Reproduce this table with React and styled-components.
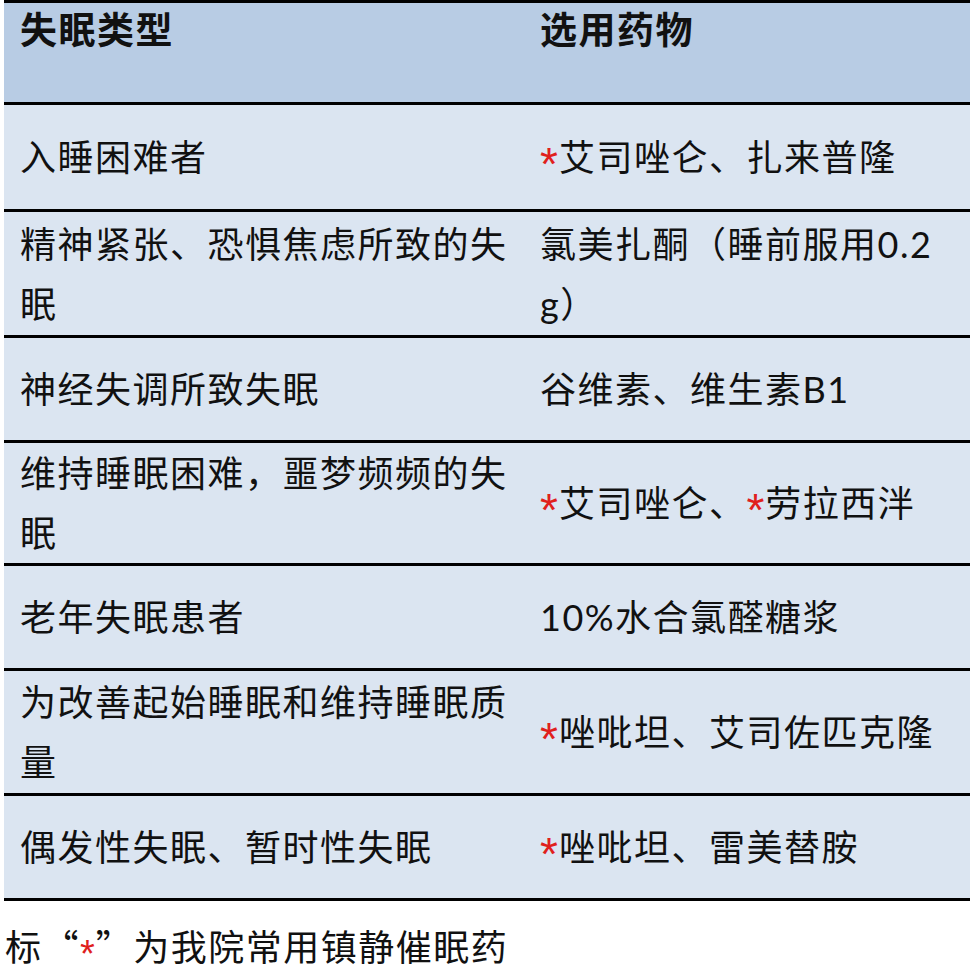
import React from 'react';
import styled, { createGlobalStyle } from 'styled-components';

const GlobalStyle = createGlobalStyle`
  html, body {
    margin: 0;
    padding: 0;
    background: #ffffff;
  }
  body {
    font-family: "Lato", "Noto Sans CJK SC", sans-serif;
    color: #111111;
  }
`;

const Page = styled.div`
  width: 972px;
  padding-left: 4px;
  box-sizing: border-box;
`;

const Table = styled.div`
  width: 966px;
  border-top: 3px solid #000;
`;

const Row = styled.div`
  display: grid;
  grid-template-columns: 520px 1fr;
  height: ${props => props.h}px;
  background: ${props => (props.header ? '#b8cce4' : '#dbe5f1')};
  border-bottom: 3px solid #000;
`;

const Cell = styled.div`
  display: flex;
  align-items: ${props => (props.header ? 'flex-start' : 'center')};
  padding-left: 16px;
  padding-top: ${props => (props.header ? 5 : 0)}px;
  font-size: ${props => (props.header ? 37 : 36)}px;
  font-weight: ${props => (props.header ? 700 : 400)};
  letter-spacing: 1.5px;
  line-height: ${props => (props.header ? 44 : 60)}px;
  white-space: nowrap;
`;

const Star = styled.span`
  display: inline-block;
  color: #e0201c;
  font-family: "Liberation Sans", sans-serif;
  font-size: ${props => (props.small ? 38 : 46)}px;
  line-height: 1;
  letter-spacing: 0;
  margin-right: 1px;
  vertical-align: ${props => (props.small ? -0.16 : -0.21)}em;
`;

const Cjk = styled.span`
  font-family: "Noto Sans CJK SC", sans-serif;
`;

const Footer = styled.div`
  padding-top: 22px;
  padding-left: 1px;
  font-size: 36px;
  letter-spacing: 1.5px;
  line-height: 44px;
`;

const rows = [
  { h: 104, a: '入睡困难者', b: [<Star key="s">*</Star>, '艾司唑仑、扎来普隆'] },
  {
    h: 123,
    a: ['精神紧张、恐惧焦虑所致的失', <br key="b" />, '眠'],
    b: ['氯美扎酮（睡前服用0.2', <br key="b" />, 'g）'],
  },
  { h: 102, a: '神经失调所致失眠', b: '谷维素、维生素B1' },
  {
    h: 120,
    a: ['维持睡眠困难，噩梦频频的失', <br key="b" />, '眠'],
    b: [<Star key="s1">*</Star>, '艾司唑仑、', <Star key="s2">*</Star>, '劳拉西泮'],
  },
  { h: 102, a: '老年失眠患者', b: '10%水合氯醛糖浆' },
  {
    h: 122,
    a: ['为改善起始睡眠和维持睡眠质', <br key="b" />, '量'],
    b: [<Star key="s">*</Star>, '唑吡坦、艾司佐匹克隆'],
  },
  { h: 102, a: '偶发性失眠、暂时性失眠', b: [<Star key="s">*</Star>, '唑吡坦、雷美替胺'] },
];

export default function App() {
  return (
    <Page>
      <GlobalStyle />
      <Table>
        <Row header h={99}>
          <Cell header>失眠类型</Cell>
          <Cell header>选用药物</Cell>
        </Row>
        {rows.map((r, i) => (
          <Row key={i} h={r.h}>
            <Cell><div>{r.a}</div></Cell>
            <Cell><div>{r.b}</div></Cell>
          </Row>
        ))}
      </Table>
      <Footer>
        标<Cjk>“</Cjk><Star small>*</Star><Cjk>”</Cjk>为我院常用镇静催眠药
      </Footer>
    </Page>
  );
}
